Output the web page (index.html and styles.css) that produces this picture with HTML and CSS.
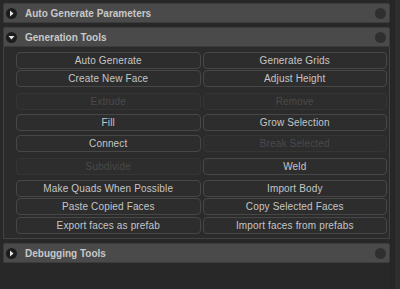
FILE: index.html
```html
<!DOCTYPE html>
<html>
<head>
<meta charset="utf-8">
<link rel="stylesheet" href="styles.css">
</head>
<body>
<div class="root">
  <div class="main">
    <div class="header">
      <span class="fold"><svg width="11" height="11" viewBox="0 0 11 11"><circle cx="5.5" cy="5.5" r="5.5" fill="#1c1c1c"/><path d="M4 2.5 L7.5 5.5 L4 8.5 Z" fill="#e6e6e6"/></svg></span>
      <span class="title">Auto Generate Parameters</span>
      <span class="dot"></span>
    </div>
    <div class="header open">
      <span class="fold"><svg width="11" height="11" viewBox="0 0 11 11"><circle cx="5.5" cy="5.5" r="5.5" fill="#1c1c1c"/><path d="M2.5 4 L8.5 4 L5.5 7.5 Z" fill="#e6e6e6"/></svg></span>
      <span class="title">Generation Tools</span>
      <span class="dot"></span>
    </div>
    <div class="panel">
      <div class="row r1"><button class="btn">Auto Generate</button><button class="btn">Generate Grids</button></div>
      <div class="row r2"><button class="btn">Create New Face</button><button class="btn">Adjust Height</button></div>
      <div class="row r3"><button class="btn off">Extrude</button><button class="btn off">Remove</button></div>
      <div class="row r4"><button class="btn">Fill</button><button class="btn">Grow Selection</button></div>
      <div class="row r5"><button class="btn">Connect</button><button class="btn off">Break Selected</button></div>
      <div class="row r6"><button class="btn off">Subdivide</button><button class="btn">Weld</button></div>
      <div class="row r7"><button class="btn">Make Quads When Possible</button><button class="btn">Import Body</button></div>
      <div class="row r8"><button class="btn">Paste Copied Faces</button><button class="btn">Copy Selected Faces</button></div>
      <div class="row r9"><button class="btn">Export faces as prefab</button><button class="btn">Import faces from prefabs</button></div>
    </div>
    <div class="header last">
      <span class="fold"><svg width="11" height="11" viewBox="0 0 11 11"><circle cx="5.5" cy="5.5" r="5.5" fill="#1c1c1c"/><path d="M4 2.5 L7.5 5.5 L4 8.5 Z" fill="#e6e6e6"/></svg></span>
      <span class="title">Debugging Tools</span>
      <span class="dot"></span>
    </div>
  </div>
  <div class="scroll"></div>
</div>
</body>
</html>
```

FILE: styles.css
```css
html, body {
  margin: 0;
  padding: 0;
  background: #282828;
  width: 400px;
  height: 289px;
  overflow: hidden;
}
.root {
  display: flex;
  height: 289px;
  font-family: "Liberation Sans", Arial, sans-serif;
}
.main {
  width: 387px;
  padding: 3px 0 0 3px;
}
.scroll {
  width: 10px;
  border-left: 5px solid #262626;
  background: #2e2e2e;
  box-sizing: border-box;
}
.header {
  height: 20px;
  box-sizing: border-box;
  background: #4a4a4a;
  border: 1px solid #3c3c3c;
  border-radius: 2px;
  display: flex;
  align-items: center;
  padding: 0 3px 0 2px;
  margin-bottom: 4px;
}
.header.open {
  border-radius: 2px 2px 0 0;
  margin-bottom: 0;
  height: 20px;
}
.header.last {
  margin-top: 4px;
}
.fold {
  width: 11px;
  height: 11px;
  display: flex;
}
.title {
  flex: 1;
  margin-left: 8px;
  color: #c8c8c8;
  font-weight: bold;
  font-size: 10px;
}
.dot {
  width: 11px;
  height: 11px;
  border-radius: 50%;
  background: #2f2f2f;
}
.panel {
  height: 192px;
  box-sizing: border-box;
  background: #2b2b2b;
  border: 1px solid #434343;
  border-top: none;
  padding: 5px 2px 0 12px;
}
.row {
  display: grid;
  grid-template-columns: 1fr 1fr;
  column-gap: 2px;
  height: 17px;
}
.r2 { margin-top: 1px; }
.r3 { margin-top: 6px; }
.r4 { margin-top: 4px; }
.r5 { margin-top: 4px; }
.r6 { margin-top: 6px; }
.r7 { margin-top: 5px; }
.r8 { margin-top: 1px; }
.r9 { margin-top: 2px; }
.btn {
  margin: 0;
  padding: 0;
  height: 17px;
  box-sizing: border-box;
  background: #2d2d2d;
  border: 1px solid #474747;
  border-radius: 4px;
  color: #c6c6c6;
  font-family: "Liberation Sans", Arial, sans-serif;
  font-size: 10px;
  line-height: 15px;
  text-align: center;
  letter-spacing: 0.15px;
}
.btn.off {
  color: #4a4a4a;
  border-color: #353535;
}
```
